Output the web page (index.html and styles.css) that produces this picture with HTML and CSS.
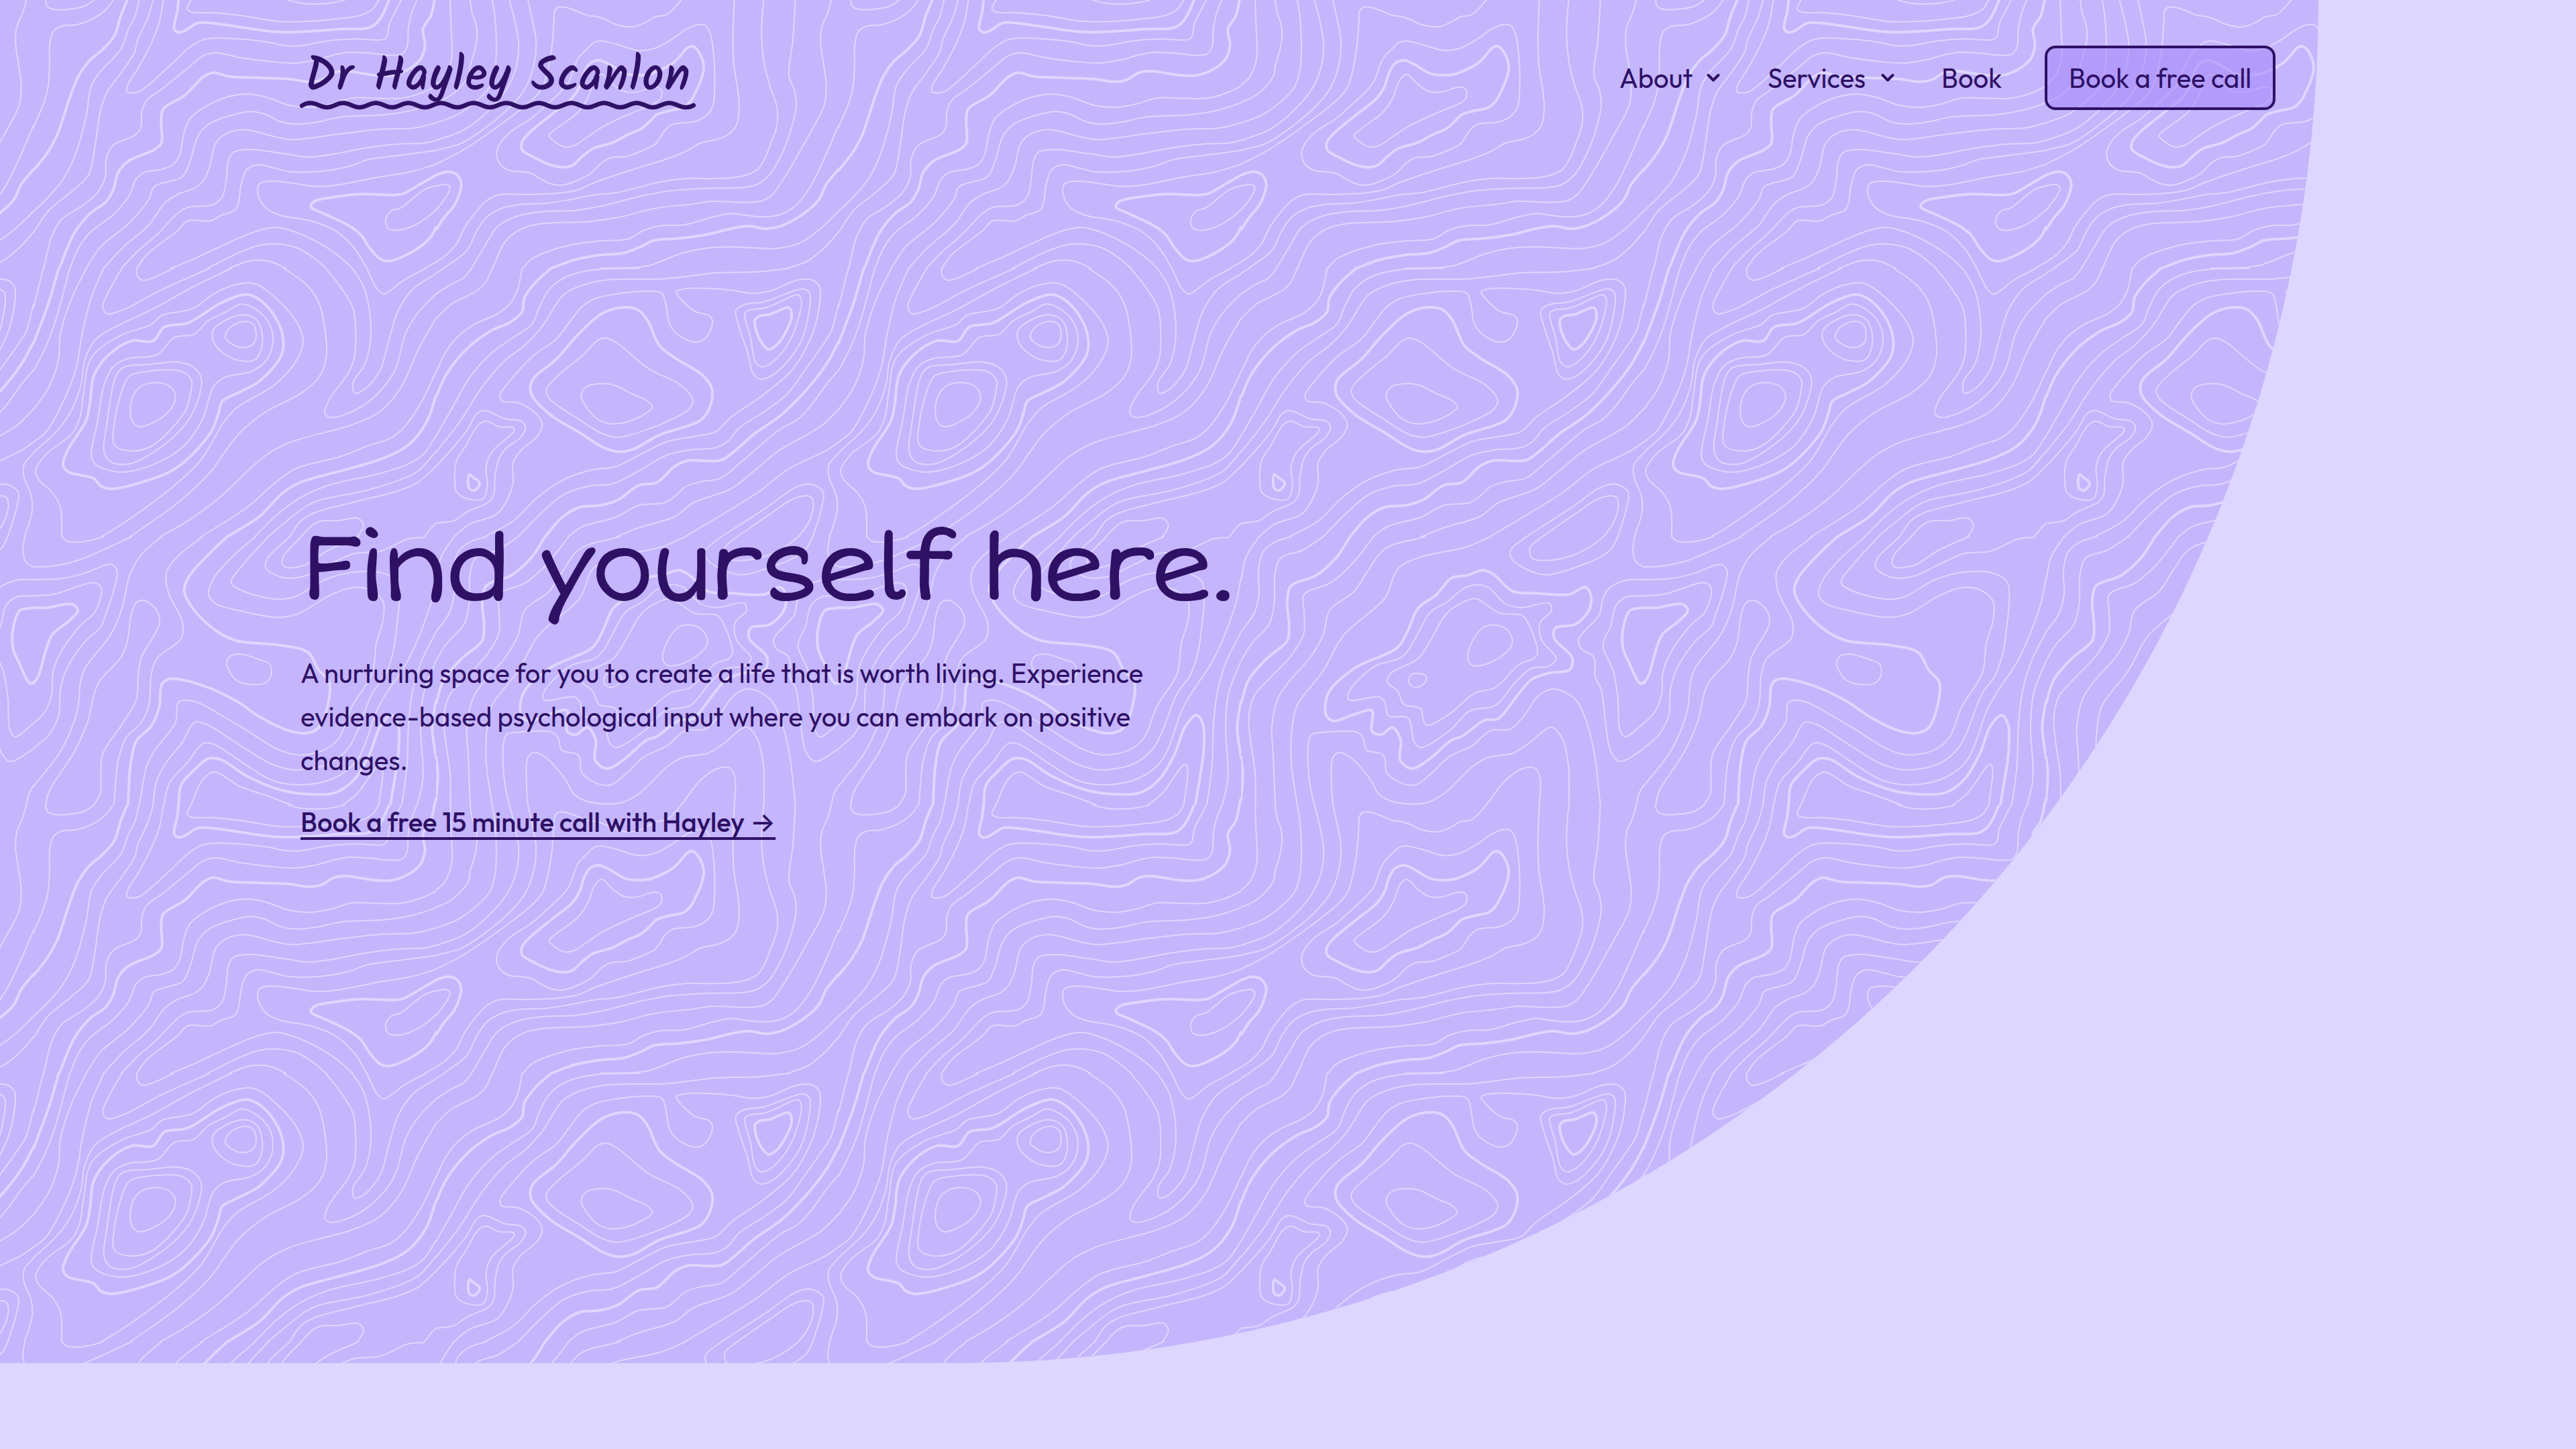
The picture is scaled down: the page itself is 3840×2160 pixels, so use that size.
FILE: index.html
```html
<!DOCTYPE html>
<html lang="en">
<head>
<meta charset="utf-8">
<title>Dr Hayley Scanlon</title>
<link rel="stylesheet" href="styles.css">
</head>
<body>
<div class="hero">
  <svg class="hero-pattern" aria-hidden="true">
    <defs>
      <pattern id="topo" x="1850" y="0" width="1200" height="1200" patternUnits="userSpaceOnUse">
        <g id="contours" class="contours"></g>
      </pattern>
    </defs>
    <rect width="100%" height="100%" fill="url(#topo)"/>
  </svg>
  <header class="site-header">
    <a class="logo" href="#">
      <span class="logo-text">Dr Hayley Scanlon</span>
      <svg class="logo-wave" viewBox="0 0 592 14" aria-hidden="true">
        <path d="M4 7.6C9 4 13 3.5 17 3.5c10 0 14.3 6.5 24.3 6.5s14.3-6.5 24.3-6.5s14.3 6.5 24.3 6.5s14.3-6.5 24.3-6.5s14.3 6.5 24.3 6.5s14.3-6.5 24.3-6.5s14.3 6.5 24.3 6.5s14.3-6.5 24.3-6.5s14.3 6.5 24.3 6.5s14.3-6.5 24.3-6.5s14.3 6.5 24.3 6.5s14.3-6.5 24.3-6.5s14.3 6.5 24.3 6.5s14.3-6.5 24.3-6.5s14.3 6.5 24.3 6.5s14.3-6.5 24.3-6.5s14.3 6.5 24.3 6.5s14.3-6.5 24.3-6.5s14.3 6.5 24.3 6.5s14.3-6.5 24.3-6.5s14.3 6.5 24.3 6.5s14.3-6.5 24.3-6.5s14.3 6.5 24.3 6.5c5 0 9-1 12-3"/>
      </svg>
    </a>
    <nav class="nav">
      <a class="nav-link nav-about" href="#"><span>About</span><svg class="chevron" viewBox="0 0 20 14"><path d="M2.5 3L10 10.5L17.5 3"/></svg></a>
      <a class="nav-link nav-services" href="#"><span>Services</span><svg class="chevron" viewBox="0 0 20 14"><path d="M2.5 3L10 10.5L17.5 3"/></svg></a>
      <a class="nav-link nav-book" href="#"><span>Book</span></a>
      <a class="button" href="#"><span>Book a free call</span></a>
    </nav>
  </header>
  <main class="intro">
    <h1 class="title">Find yourself here.</h1>
    <p class="lead">A nurturing space for you to create a life that is worth living. Experience evidence-based psychological input where you can embark on positive changes.</p>
    <a class="cta" href="#">Book a free 15 minute call with Hayley <span class="arrow">→</span></a>
  </main>
</div>
<script src="script.js"></script>
</body>
</html>
```
FILE: styles.css
```css
body {
  margin: 0;
  min-height: 2160px;
  background: #ddd6fe;
  color: #2e1065;
  font-family: Outfit, Lato, "Noto Sans", sans-serif;
  font-size: 40px;
  line-height: 65px;
}

a {
  color: inherit;
  text-decoration: none;
}

.hero {
  position: relative;
  box-sizing: border-box;
  width: 3456px;
  height: 2032px;
  padding: 68px 64px 0 448px;
  overflow: hidden;
  border-bottom-right-radius: 2032px;
  background: #c4b5fd;
}

.hero-pattern {
  position: absolute;
  inset: 0;
  width: 100%;
  height: 100%;
}

.contours path {
  fill: none;
  stroke: #ddd6fe;
  stroke-width: 2px;
  stroke-linecap: round;
}

.contours .index-line {
  stroke-width: 4px;
}

.site-header {
  position: relative;
  display: flex;
  justify-content: space-between;
  height: 96px;
}

.logo {
  display: flex;
  flex-direction: column;
  width: 592px;
  padding-top: 10px;
}

.logo-text {
  height: 72px;
  padding-left: 7px;
  font-family: Kalam, Caveat, "DejaVu Sans", sans-serif;
  font-weight: 400;
  font-size: 70px;
  line-height: 76px;
  letter-spacing: 1.9px;
  white-space: nowrap;
  -webkit-text-stroke: 1.4px #2e1065;
}

.logo-wave {
  width: 592px;
  height: 14px;
  margin-left: -2px;
  fill: none;
  stroke: #2e1065;
  stroke-width: 6.5px;
  stroke-linecap: round;
}

.nav {
  display: flex;
  align-items: center;
}

.nav-link {
  display: flex;
  align-items: center;
  justify-content: space-between;
  white-space: nowrap;
}

.nav-about {
  width: 150px;
  margin-right: 71px;
}

.nav-services {
  width: 189px;
  margin-right: 70px;
}

.nav-book {
  width: 89px;
  margin-right: 65px;
}

.chevron {
  width: 20px;
  height: 14px;
  fill: none;
  stroke: #2e1065;
  stroke-width: 4px;
  stroke-linecap: round;
  stroke-linejoin: round;
}

.button {
  box-sizing: border-box;
  width: 344px;
  height: 96px;
  padding: 12px 32px;
  border: 4px solid #2e1065;
  border-radius: 16px;
  background: rgba(167, 139, 250, 0.6);
  white-space: nowrap;
}

.intro {
  position: relative;
  width: 1400px;
  padding-top: 604px;
}

.title {
  margin: 0;
  font-family: "Short Stack", "DejaVu Sans", sans-serif;
  font-size: 144px;
  font-weight: 400;
  line-height: 160px;
  letter-spacing: -0.05em;
  white-space: nowrap;
}

.lead {
  width: 1330px;
  margin: 43px 0 27px;
}

.cta {
  font-weight: 500;
  text-decoration: underline;
  text-decoration-thickness: 4px;
  text-underline-offset: 8px;
}

.arrow {
  font-family: Inter, sans-serif;
}
```
FILE: script.js
```js
// Contour lines, one sheet per 600x400 part of the 1200x1200 tile.
// "*" marks an index contour (thicker), a trailing "z" a closed one.
const sheets = [
  { col: 0, row: 0, lines: `
55,0 59,130 63,230 55,290 30,350 0,380
133,0 141,60 155,105 160,160 150,230 133,295 128,335 90,395 40,438 0,457
219,0 229,70 235,190 230,310 208,390 150,460 80,515 0,550
286,0 308,100 322,200 310,310 275,400 200,500 110,580 0,628
358,0 375,90 389,180 383,280 350,390 300,465 200,565 100,640 0,672
955,0 925,40 895,67 855,74 820,98 780,117 740,119 700,109 660,88 620,73 590,69 545,48 505,33 475,33 462,50 459,100 450,220 430,340 415,390 380,440 260,550 100,675 0,734
640,183 700,197 790,226 850,217 910,182 980,128 1020,110 1050,114 1068,150 1082,250 1085,400 1078,475 1055,515 1010,543 920,557 890,585 865,630 850,648 790,680 740,700 680,706 645,728 605,773 550,807 490,828 450,823 410,802 370,775 330,768 285,762 250,735 236,695 245,650 290,590 370,530 420,480 490,405 515,370 555,258 585,222 615,190 z
* 635,270 675,288 735,328 785,336 835,331 920,285 950,252 980,213 1000,207 1025,235 1043,300 1030,365 1010,415 995,448 965,480 910,495 860,512 835,540 800,575 740,606 690,637 610,665 570,700 530,740 490,748 440,735 380,703 335,670 335,635 360,598 450,512 530,438 560,385 575,330 600,283 z
645,332 690,378 730,408 780,412 850,389 875,398 878,435 855,460 780,497 660,560 590,612 540,650 500,657 470,640 440,607 460,583 550,505 590,440 620,355 z
1162,0 1157,150 1160,290 1175,400 1181,480 1170,560 1140,600 1100,622 1030,640 975,676 900,710 770,757 620,815 550,850 480,863 360,870 250,870 200,895 150,955 110,1020 80,1090 40,1140 0,1172
1276,0 1268,140 1278,280 1300,380 1328,480 1328,560 1305,640 1280,710 1255,755 1210,782 1150,795 1060,799 980,798 880,812 700,862 620,871 520,893 430,909 330,914 260,930 200,968 160,1030 120,1120 30,1200
1400,0 1390,180 1375,340 1395,400 1403,470 1385,570 1350,680 1300,780 1250,825 1190,839 1050,842 900,855 800,877 650,920 540,941 420,946 320,965 240,1013 190,1100 138,1200
1540,0 1525,60 1503,120 1498,190 1510,290 1520,380 1512,470 1450,610 1370,770 1310,870 1270,898 1200,905 1080,900 990,914 850,932 720,970 600,990 400,1002 330,1025 270,1080 220,1200
1568,560 1520,690 1460,830 1400,920 1340,960 1270,970 1200,962 1150,955 1080,970 965,1006 880,1009 810,1030 750,1068 640,1078 540,1092 430,1127 370,1160 338,1200
* 1568,757 1520,825 1490,895 1420,965 1340,1012 1285,1023 1220,1011 1160,1020 1050,1050 950,1066 850,1075 800,1102 730,1132 640,1140 540,1162 448,1200
1568,945 1500,1020 1420,1085 1330,1111 1150,1104 1050,1110 960,1132 830,1187 760,1197 640,1199
1568,1037 1520,1100 1450,1165 1370,1200
* 0,782 45,768 80,780 98,820 90,870 70,920 30,975 0,1028
0,831 40,825 54,840 40,880 0,940` },
  { col: 1, row: 0, lines: `
46,0 55,30 80,42 150,40 200,27 237,0
311,0 280,45 230,85 170,110 110,117 78,140 64,190 62,310 55,400 40,460 0,570
* 365,0 340,70 315,160 270,220 215,275 175,340 140,440 90,610 50,690 0,762
411,0 395,75 370,130 340,220 260,320 225,385 205,520 160,700 110,810 50,890 0,945
466,0 445,80 405,180 395,230 345,320 285,415 260,500 240,650 215,780 150,855 60,940 0,1040
506,0 490,100 460,190 410,300 365,385 365,412 410,410 450,378 530,295 610,210 660,178 720,170 840,178 920,190 980,204 1040,204 1150,182 1250,174 1365,176 1378,160 1385,110 1410,50 1433,0
* 565,0 560,50 548,130 565,145 590,137 640,103 700,104 800,120 900,137 980,144 1100,138 1200,130 1300,126 1335,105 1360,65 1385,0
613,0 598,40 615,54 700,57 800,68 960,96 1080,95 1180,85 1270,70 1320,42 1345,0
990,0 1040,14 1100,18 1170,11 1213,0
1493,0 1470,70 1460,130 1455,210 1435,242 1390,247 1310,238 1230,234 1180,243 1100,268 1020,282 920,275 810,259 710,236 660,250 600,305 500,398 440,450 422,500 418,570 400,600 310,650 283,710 280,790 250,860 190,920 110,980 70,1060 40,1200
* 1562,0 1548,70 1517,130 1525,200 1510,260 1460,310 1395,337 1320,335 1220,318 1170,325 1120,358 1070,365 1000,354 880,348 760,342 700,325 660,345 590,425 505,488 497,540 498,640 470,670 370,720 330,770 310,850 280,905 220,955 160,1040 100,1200
1568,385 1520,412 1440,438 1340,440 1240,438 1160,465 1080,480 1000,472 900,433 830,421 760,432 680,470 610,530 585,600 570,690 545,735 500,757 430,772 400,800 370,880 310,960 220,1040 175,1110 142,1200
1568,460 1480,492 1370,513 1200,523 1100,547 1020,555 960,543 900,510 845,499 780,512 680,557 640,610 610,720 580,790 470,835 450,890 370,1000 260,1105 205,1200
1568,550 1480,573 1350,578 1200,598 1010,624 950,614 820,580 750,598 710,640 685,750 660,810 630,840 560,870 510,910 450,1005 350,1105 273,1200
1568,628 1520,640 1440,643 1320,657 1080,702 980,688 840,668 780,680 760,715 750,810 735,880 700,915 600,928 565,950 480,1050 400,1130 342,1200
1568,673 1400,698 1300,715 1240,740 1150,762 1000,768 940,752 870,737 830,760 808,830 800,900 785,940 730,963 690,988 600,988 560,1033 440,1140 402,1200
1568,735 1470,768 1340,793 1180,828 1090,833 1030,823 930,810 880,823 875,870 905,930 960,962 1080,988 1180,1035 1250,1110 1298,1200
* 1568,783 1500,828 1440,866 1400,872 1280,868 1180,880 1095,900 1080,925 1130,955 1230,1010 1275,1050 1310,1110 1350,1158 1380,1168 1430,1152 1510,1100 1550,1055 1568,1015
1568,830 1520,850 1430,930 1395,942 1372,980 1380,1020 1415,1030 1470,1015 1530,975 1568,938
535,1200 620,1160 780,1075 880,1030 945,1017 1000,1030 1110,1085 1200,1155 1242,1200
678,1200 800,1130 880,1097 960,1092 1030,1110 1090,1152 1140,1200
762,1200 830,1170 880,1163 930,1172 982,1200
1525,1200 1568,1172` },
  { col: 0, row: 1, lines: `
0,22 32,0
0,115 60,70 105,45 139,0
0,225 60,160 160,100 195,60 219,0
0,465 40,370 90,300 150,250 240,203 290,155 318,95 335,0
* 0,575 40,475 120,360 210,282 290,240 335,195 345,130 390,60 448,0
0,750 60,630 130,490 220,375 300,310 375,248 400,180 440,95 500,42 560,18 640,4 790,0
0,822 90,690 180,530 270,410 345,345 410,265 490,125 520,100 600,65 680,50 880,47 960,38 1090,20 1250,16 1378,0
0,885 60,810 120,725 160,650 190,636 270,673 330,683 348,710 330,755 275,803 245,850 230,930 225,1010 205,1045 120,1090 70,1128 0,1140
70,1200 130,1145 235,1100 270,1050 300,960 300,870 330,815 395,750 414,700 395,655 325,603 255,592 250,565 290,500 380,390 470,315 520,240 570,170 620,135 700,115 830,102 880,112 895,160 910,250 940,295 1010,330 1050,312 1077,240 1065,212 1010,193 960,145 935,105 965,92 1130,95 1240,112 1310,98 1400,55 1460,50 1493,80 1490,190 1460,310 1390,450 1270,570 1150,665 1090,730 1000,753 900,775 800,830 700,887 600,903 480,955 390,1030 300,1130 190,1200
* 740,174 790,188 825,235 870,345 930,400 1040,480 1075,540 1070,610 1035,675 980,705 870,745 770,808 710,820 650,800 560,735 440,650 370,560 375,500 470,405 550,300 650,200 z
660,312 700,330 830,450 950,520 1000,590 985,630 900,685 750,747 700,755 640,735 570,685 440,580 430,540 480,475 570,390 630,322 z
650,515 700,525 760,560 820,590 843,620 815,650 740,688 680,695 630,675 580,610 565,570 585,530 z
1168,190 1200,163 1280,149 1430,92 1455,110 1452,200 1420,330 1350,440 1300,485 1265,495 1235,470 1215,380 1180,260 z
1203,200 1220,187 1280,178 1330,155 1410,118 1423,140 1405,250 1370,340 1310,420 1270,440 1245,420 1225,310 z
* 1243,230 1260,213 1300,206 1375,177 1385,215 1365,280 1325,345 1295,363 1270,335 1245,270 z
195,683 245,708 300,712 305,725 215,825 195,890 200,970 185,1030 120,1030 80,1000 73,950 80,860 115,795 165,700 z
* 130,922 145,935 170,960 150,993 130,985 125,950 z
320,1200 410,1095 500,1010 590,975 690,963 780,912 900,835 990,812 1090,802 1140,770 1180,715 1280,640 1370,560 1440,450 1520,320 1540,280 1568,160
* 425,1200 490,1115 560,1068 640,1060 710,1035 790,970 860,958 930,885 980,860 1110,858 1160,820 1240,740 1340,660 1430,560 1520,430 1568,330
515,1200 570,1155 700,1113 790,1060 890,1048 930,1020 970,978 1030,955 1110,938 1190,865 1340,720 1410,675 1470,600 1520,520 1568,455
703,1200 790,1160 930,1110 1000,1050 1150,985 1230,915 1330,820 1500,705 1568,630
970,1200 1250,1005 1370,900 1520,815 1568,777
1568,825 1530,880 1530,930 1560,1020 1562,1090 1533,1200
1112,1200 1300,1060 1400,980 1460,965 1508,1000 1500,1080 1468,1200
1173,1200 1300,1100 1400,1027 1460,1022 1470,1060 1450,1140 1412,1200` },
  { col: 1, row: 1, lines: `
38,0 0,175
* 98,0 60,150 0,335
141,0 80,255 40,370 0,458
206,0 150,130 105,290 97,410 60,530 0,632
273,0 225,130 190,290 165,450 110,610 50,730 0,778
0,825 100,715 150,630 185,520 200,410 240,320 330,255 460,185 610,90 770,0
110,1200 105,1070 75,1005 20,945 8,905 50,830 150,740 180,670 195,560 225,400 340,300 460,250 500,210 620,180 700,115 780,75 860,68 950,140 1030,250 1050,330 1020,420 940,520 790,625 740,690 650,860 550,970 350,1140 265,1200
* 830,117 880,140 940,215 972,310 965,390 880,505 800,555 735,595 720,650 690,735 560,890 440,950 300,986 260,972 235,940 135,910 115,880 130,820 205,680 220,600 235,480 290,390 380,325 465,325 510,262 600,245 730,155 z
810,160 880,195 925,265 930,350 900,420 850,460 740,490 700,530 660,670 590,790 500,860 390,905 320,910 240,875 225,840 250,680 275,520 310,440 370,403 480,387 550,308 625,295 680,235 750,195 z
820,208 870,232 890,290 885,370 860,410 800,412 740,380 700,325 700,275 760,225 z
820,237 855,250 867,290 858,335 820,355 775,340 747,310 765,265 z
360,438 450,430 560,419 620,440 653,490 640,590 590,700 470,820 370,875 300,865 275,820 285,700 315,500 335,455 z
440,461 580,462 615,500 610,570 590,640 460,795 370,816 315,790 315,690 350,530 375,480 z
470,511 530,527 553,570 540,620 490,675 410,708 383,680 380,600 410,535 z
344,0 290,110 270,170 285,202 350,185 500,95 686,0
401,0 405,35 425,53 460,45 545,0
975,0 1060,70 1110,150 1135,270 1140,400 1110,490 1040,560 900,645 800,740 740,830 690,910 560,1050 377,1200
1138,0 1200,90 1245,180 1255,280 1250,400 1225,470 1150,590 1135,650 1160,667 1260,630 1350,550 1410,450 1450,290 1500,195 1568,115
1242,0 1285,80 1310,200 1312,330 1290,430 1245,510 1250,557 1290,540 1350,455 1380,340 1420,190 1480,90 1568,25
1298,0 1340,95 1365,115 1395,95 1440,55 1528,0
1568,223 1500,360 1430,535 1350,640 1240,700 1000,778 900,840 720,1030 600,1130 495,1200
1568,462 1510,600 1440,715 1390,760 1300,795 1200,840 1020,897 940,960 830,1070 653,1200
* 1568,570 1530,690 1460,790 1360,850 1200,905 1040,957 970,1005 880,1110 755,1200
1568,748 1520,830 1460,875 1340,920 1150,970 1040,1025 950,1100 862,1200
1568,818 1500,905 1440,940 1300,992 1110,1038 1060,1065 913,1200
1568,885 1500,955 1420,995 1250,1045 1090,1095 1040,1130 998,1200
1042,1200 1090,1145 1120,1130 1190,1128 1265,1118 1285,1150 1263,1200
1523,1200 1550,1160 1568,1140` },
  { col: 0, row: 2, lines: `
0,195 20,90 70,0
0,425 50,345 70,260 68,150 85,70 130,25 197,0
0,555 40,480 110,390 130,290 132,170 155,95 240,60 320,0
* 0,745 30,640 100,545 180,465 187,400 180,290 195,220 290,175 370,95 425,0
57,1200 55,1060 30,820 50,715 110,635 200,525 245,430 245,330 245,260 350,205 430,125 517,0
133,1200 125,970 120,850 145,720 200,630 270,540 320,440 345,330 440,245 490,160 560,55 717,0
219,1200 195,1000 203,820 220,750 320,600 400,440 560,275 610,145 690,95 880,45 973,0
* 945,150 985,170 1060,245 1150,253 1280,258 1340,226 1363,260 1355,330 1300,393 1225,408 1220,455 1290,540 1280,595 1200,610 1130,640 1080,705 1000,815 950,820 860,893 820,910 730,998 665,1037 620,1000 622,910 590,853 545,885 510,870 510,778 440,795 360,824 332,800 340,700 440,590 610,495 650,420 690,320 760,260 820,185 880,173 z
925,215 965,228 1030,300 1090,317 1200,298 1210,330 1165,385 1170,460 1228,545 1200,578 1130,590 1070,650 990,755 890,780 810,870 700,943 675,920 650,810 575,802 560,740 540,717 420,730 420,695 520,580 630,535 740,335 800,295 870,230 z
915,277 950,300 1010,343 1095,352 1120,390 1155,520 1140,545 1085,570 990,675 910,700 810,795 725,843 710,820 700,770 635,750 610,690 570,650 585,610 690,545 740,460 800,345 870,290 z
990,395 1035,415 1058,470 1035,515 960,568 900,575 883,545 900,470 945,405 z
685,611 722,625 715,655 680,674 655,655 660,620 z
286,1200 267,1100 262,930 275,885 310,876 455,876 475,900 490,955 550,973 562,1000 565,1050 620,1100 680,1110 740,1060 810,985 900,935 970,868 1050,860 1100,805 1160,710 1220,681 1300,725 1340,810 1375,960 1400,1200
358,1200 352,1100 357,990 380,965 430,990 500,1080 540,1155 600,1187 720,1190 790,1150 900,1030 960,988 1060,968 1120,925 1210,852 1250,900 1275,1020 1278,1200
955,1200 1030,1090 1090,1040 1145,1035 1165,1080 1162,1200
* 0,985 7,1060 0,1180
1112,0 1050,60 1055,100 1130,155 1190,170 1270,150 1410,85 1445,50 1468,0
1173,0 1125,50 1135,97 1210,105 1300,80 1360,45 1412,0
1533,0 1527,70 1540,115 1568,135
1568,192 1500,195 1430,235 1407,290 1395,350 1315,460 1325,500 1375,540 1380,630 1402,680 1420,830 1440,960 1475,1005 1568,950
1568,265 1500,270 1460,310 1440,400 1410,485 1450,600 1468,720 1475,860 1495,895 1568,835
* 1568,318 1515,330 1490,400 1488,500 1510,560 1555,657 1568,650
1540,1200 1550,1150 1568,1112` },
  { col: 1, row: 2, lines: `
110,0 130,20 175,24 230,14 271,0
0,135 70,132 170,107 270,60 382,0
0,192 110,187 200,163 300,124 325,150 310,250 280,350 265,400 200,470 130,590 105,680 98,800 60,885 0,948
0,265 80,257 240,206 264,230 240,335 180,400 100,530 75,610 70,710 40,790 0,835
* 0,318 50,318 150,302 173,330 140,375 75,435 50,500 20,620 0,657
498,0 420,80 375,170 345,320 305,430 200,590 183,650 170,780 110,950 0,1117
47,1200 60,1140 160,960 210,830 250,660 340,540 365,470 380,350 400,295 430,285 480,330 490,390 420,540 408,620 400,730 350,830 270,970 262,1050 260,1150 235,1200
658,0 560,90 518,160 525,250 580,380 575,455 480,545 458,620 450,750 420,830 360,900 330,1000 313,1200
* 755,0 690,70 605,180 587,240 620,320 710,420 790,465 960,485 1070,518 1110,595 1152,650 1150,730 1110,855 1060,879 980,862 880,805 790,735 670,670 530,636 500,660 490,760 460,845 400,915 378,1020 368,1200
864,0 770,95 700,190 682,260 710,300 800,330 950,361 1030,345 1150,265 1230,230 1300,233 1360,285 1362,370 1335,480 1320,610 1240,760 1190,900 1130,955 1030,976 950,950 800,845 620,735 565,740 553,830 470,960 440,1030 412,1200
915,0 820,120 770,205 810,240 950,280 1020,268 1130,195 1240,160 1350,160 1415,200 1425,270 1415,400 1400,520 1370,620 1320,700 1230,940 1150,1015 1020,1043 930,1018 800,930 670,838 625,832 580,920 520,1005 480,1090 465,1200
998,0 910,100 905,140 970,183 1050,178 1150,125 1250,75 1350,65 1460,10 1520,3
1043,0 970,95 975,133 1050,130 1150,60 1267,0
1568,185 1545,310 1460,550 1380,690 1340,770 1260,1000 1170,1080 1040,1110 930,1090 820,1015 700,928 660,925 600,1010 530,1100 507,1200
* 565,1200 575,1110 620,1050 680,993 730,997 830,1070 970,1135 1100,1153 1180,1143 1250,1085 1310,970 1350,850 1395,798 1420,840 1422,960 1390,1200
613,1200 660,1085 705,1052 760,1085 800,1115 900,1155 1005,1200
752,570 765,535 805,525 880,550 920,570 925,620 900,655 840,660 790,642 z
1205,1200 1260,1150 1350,1017 1360,1040 1345,1200
1568,425 1510,560 1475,700 1460,850 1455,1020 1435,1200
1568,555 1520,700 1508,850 1517,1080 1495,1200
* 1568,735 1553,850 1568,990
* 1568,1170 1562,1200` }
];

// Centripetal Catmull-Rom spline through the points, as cubic Beziers.
function spline(p, closed) {
  const n = p.length;
  const at = i => closed ? p[(i + n) % n]
    : i < 0 ? [2 * p[0][0] - p[1][0], 2 * p[0][1] - p[1][1]]
    : i >= n ? [2 * p[n - 1][0] - p[n - 2][0], 2 * p[n - 1][1] - p[n - 2][1]]
    : p[i];
  const dist = (a, b) => Math.hypot(a[0] - b[0], a[1] - b[1]);
  let d = `M${p[0]}`;
  for (let i = 0; i < (closed ? n : n - 1); i++) {
    const [a, b, c, e] = [at(i - 1), at(i), at(i + 1), at(i + 2)];
    const d1 = dist(a, b), d2 = dist(b, c), d3 = dist(c, e);
    const s1 = Math.sqrt(d1), s2 = Math.sqrt(d2), s3 = Math.sqrt(d3);
    const k1 = [0, 1].map(j => (d1 * c[j] - d2 * a[j] + (2 * d1 + 3 * s1 * s2 + d2) * b[j]) / (3 * s1 * (s1 + s2)));
    const k2 = [0, 1].map(j => (d3 * b[j] - d2 * e[j] + (2 * d3 + 3 * s3 * s2 + d2) * c[j]) / (3 * s3 * (s3 + s2)));
    d += `C${[...k1, ...k2].map(v => v.toFixed(1)).join(' ')} ${c}`;
  }
  return closed ? d + 'Z' : d;
}

const ns = 'http://www.w3.org/2000/svg';
const root = document.getElementById('contours');
const sx = 600 / 1568, sy = 1 / 3;
for (const { col, row, lines } of sheets) {
  for (const line of lines.trim().split('\n')) {
    const pts = (line.match(/\d+,\d+/g) || []).map(s => {
      const [x, y] = s.split(',').map(Number);
      return [+(col * 600 + x * sx).toFixed(1), +(row * 400 + y * sy).toFixed(1)];
    });
    const path = document.createElementNS(ns, 'path');
    path.setAttribute('d', spline(pts, line.endsWith('z')));
    if (line.startsWith('*')) path.setAttribute('class', 'index-line');
    root.appendChild(path);
  }
}
```
